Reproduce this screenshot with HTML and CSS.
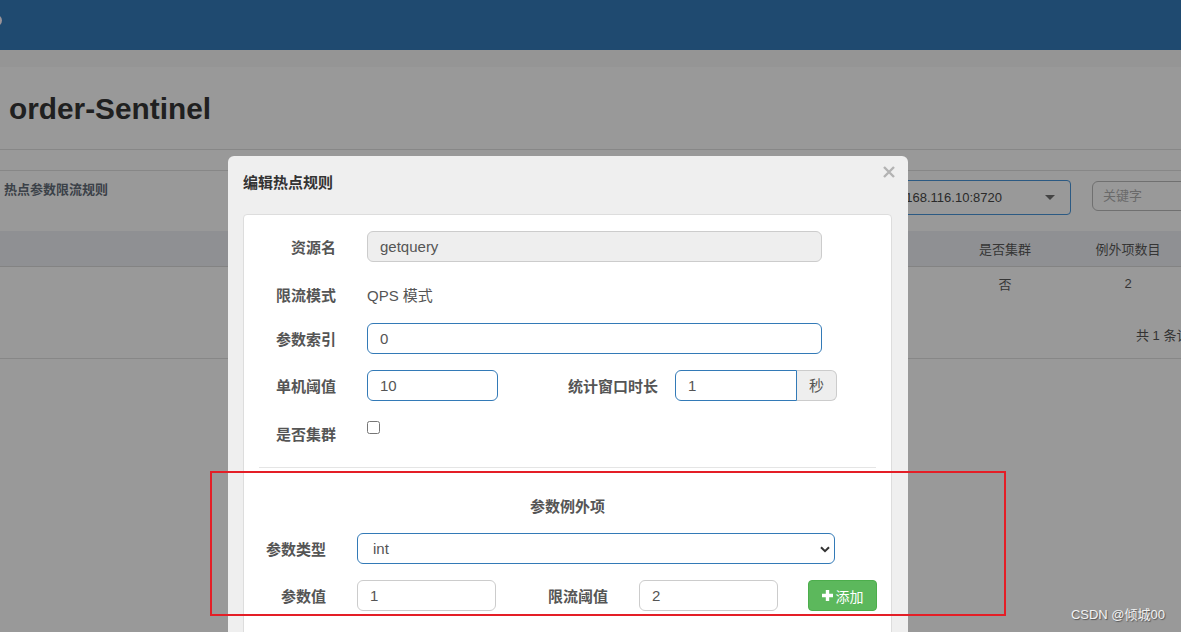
FILE: index.html
```html
<!DOCTYPE html>
<html lang="zh-CN">
<head>
<meta charset="utf-8">
<title>order-Sentinel</title>
<link rel="stylesheet" href="styles.css">
</head>
<body>
<div class="page">
  <header class="topbar"><span class="logo-edge"></span></header>
  <div class="strip"></div>
  <div class="titlebar"><h1 class="app-title">order-Sentinel</h1></div>
  <section class="rules">
    <div class="rules-head">
      <div class="rules-name">热点参数限流规则</div>
      <div class="machine-select"><span>192.168.116.10:8720</span><span class="caret"></span></div>
      <div class="keyword">关键字</div>
    </div>
    <div class="tgrid thead"><span></span><span class="col">是否集群</span><span class="col">例外项数目</span></div>
    <div class="tgrid trow"><span></span><span class="col">否</span><span class="col">2</span></div>
    <div class="pager">共 1 条记录</div>
  </section>
</div>

<div class="modal">
  <div class="modal-header">
    <div class="modal-title">编辑热点规则</div>
    <svg class="close" width="12" height="12" viewBox="0 0 12 12"><path d="M1 1 L11 11 M11 1 L1 11" stroke="#b3b3b3" stroke-width="2.4" fill="none"/></svg>
  </div>
  <div class="panel">
    <div class="row r1">
      <label class="lbl">资源名</label>
      <input class="input wide readonly ctl" value="getquery" readonly>
    </div>
    <div class="row r2">
      <label class="lbl">限流模式</label>
      <span class="static ctl">QPS 模式</span>
    </div>
    <div class="row r3">
      <label class="lbl">参数索引</label>
      <input class="input wide focus ctl" value="0">
    </div>
    <div class="row r4">
      <label class="lbl">单机阈值</label>
      <input class="input short focus ctl" value="10">
      <label class="lbl mid">统计窗口时长</label>
      <div class="group">
        <input class="input focus grp-in" value="1">
        <span class="addon">秒</span>
      </div>
    </div>
    <div class="row r5">
      <label class="lbl">是否集群</label>
      <input type="checkbox" class="chk">
    </div>
    <hr class="divider">
    <div class="sec-title">参数例外项</div>
    <div class="row ra">
      <label class="lbl lbl2">参数类型</label>
      <div class="select-wrap ctl">
        <select class="select"><option>int</option></select>
        <svg class="chev" width="10" height="7" viewBox="0 0 10 7"><path d="M1 1.2 L5 5.2 L9 1.2" stroke="#333" stroke-width="2" fill="none"/></svg>
      </div>
    </div>
    <div class="row rb">
      <label class="lbl lbl2">参数值</label>
      <input class="input sm ctl" value="1">
      <label class="lbl lbl3">限流阈值</label>
      <input class="input sm ctl" value="2">
      <button class="btn-add"><svg width="11" height="11" viewBox="0 0 11 11"><path d="M5.5 0 V11 M0 5.5 H11" stroke="#fff" stroke-width="3.4"/></svg><span>添加</span></button>
    </div>
  </div>
</div>

<div class="annotation"></div>
<div class="watermark">CSDN @倾城00</div>
</body>
</html>
```
FILE: styles.css
```css
* { box-sizing: border-box; }
html, body { margin: 0; padding: 0; }
body {
  width: 1181px;
  height: 632px;
  overflow: hidden;
  position: relative;
  background: #999999;
  font-family: "Liberation Sans", "Noto Sans CJK SC", sans-serif;
  color: #333;
}

/* background page (under the dimmed backdrop) */
.topbar {
  height: 50px;
  background: #1f4a70;
  display: flex;
  align-items: flex-start;
  padding-top: 14px;
}
.logo-edge {
  width: 14px;
  height: 13px;
  border-radius: 50%;
  background: #9b9398;
  margin-left: -12px;
}
.strip { height: 17px; background: #959595; }
.titlebar {
  height: 83px;
  border-bottom: 1px solid #878787;
  padding: 25px 0 0 9px;
}
.app-title {
  margin: 0;
  font-size: 29.8px;
  line-height: 34px;
  font-weight: bold;
  color: #202020;
}
.rules { margin-top: 20px; border-top: 1px solid #878787; }
.rules-head {
  height: 60px;
  display: grid;
  grid-template-columns: 867px 204px 120px;
  align-items: start;
}
.rules-name {
  padding: 10px 0 0 4px;
  font-size: 13px;
  line-height: 18px;
  font-weight: bold;
  color: #3b4148;
}
.machine-select {
  margin-top: 9px;
  height: 35px;
  border: 1px solid #2c5a83;
  border-radius: 4px;
  padding: 0 15px 0 12px;
  font-size: 13px;
  color: #2a2a2a;
  display: flex;
  align-items: center;
  justify-content: space-between;
}
.caret {
  width: 0;
  height: 0;
  border-left: 5px solid transparent;
  border-right: 5px solid transparent;
  border-top: 5px solid #444;
}
.keyword {
  margin: 10px 0 0 21px;
  height: 30px;
  border: 1px solid #707070;
  border-radius: 6px;
  padding-left: 10px;
  font-size: 13px;
  line-height: 28px;
  color: #6a6a6a;
}
.tgrid {
  display: grid;
  grid-template-columns: 943px 124px 122px;
  align-items: center;
  font-size: 13px;
  color: #353535;
}
.col { text-align: center; }
.thead { height: 36px; background: #8f9093; border-bottom: 1px solid #838383; }
.trow { height: 33px; }
.pager {
  height: 59px;
  border-bottom: 1px solid #878787;
  padding: 27px 0 0 1136px;
  font-size: 13px;
  line-height: 18px;
  color: #333;
  white-space: nowrap;
}

/* modal */
.modal {
  position: absolute;
  left: 228px;
  top: 156px;
  width: 680px;
  height: 520px;
  background: #efefef;
  border-radius: 6px;
}
.modal-header {
  height: 58px;
  display: flex;
  justify-content: space-between;
  align-items: flex-start;
  padding: 16px 13px 0 15px;
}
.modal-title {
  font-size: 15px;
  line-height: 21px;
  font-weight: bold;
  color: #333;
}
.close { margin-top: -6px; }
.panel {
  margin: 0 16px 0 15px;
  height: 480px;
  background: #fff;
  border: 1px solid #ddd;
  border-radius: 4px;
  padding-top: 16px;
}
.row { display: flex; align-items: flex-start; height: 31px; }
.r2 { margin-top: 17px; }
.r3 { margin-top: 13px; }
.r4 { margin-top: 16px; }
.r5 { margin-top: 17px; }
.ra { margin-top: 16px; }
.rb { margin-top: 16px; }
.lbl {
  flex: none;
  width: 92px;
  text-align: right;
  padding-top: 6px;
  font-size: 15px;
  line-height: 21px;
  font-weight: bold;
  color: #555;
}
.lbl.mid { width: 129px; margin-left: 31px; }
.lbl2 { width: 82px; }
.lbl3 { width: 81px; margin-left: 31px; }
.ctl { margin-left: 31px; }
.input {
  flex: none;
  height: 31px;
  border: 1px solid #ccc;
  border-radius: 6px;
  padding: 0 12px;
  font-family: inherit;
  font-size: 15px;
  color: #555;
  background: #fff;
  outline: none;
}
.input.wide { width: 455px; }
.input.short { width: 131px; }
.input.sm { width: 139px; }
.input.readonly { background: #eee; }
.input.focus { border-color: #337ab7; }
.static {
  padding-top: 6px;
  font-size: 15px;
  line-height: 21px;
  color: #555;
}
.group { display: flex; margin-left: 17px; }
.grp-in { width: 122px; border-radius: 6px 0 0 6px; }
.addon {
  width: 40px;
  height: 31px;
  background: #eee;
  border: 1px solid #ccc;
  border-left: none;
  border-radius: 0 6px 6px 0;
  font-size: 15px;
  line-height: 29px;
  text-align: center;
  color: #555;
}
.chk { width: 13px; height: 13px; margin: 3px 0 0 31px; }
.divider {
  margin: 18px 15px 0;
  height: 0;
  border: none;
  border-top: 1px solid #e5e5e5;
}
.sec-title {
  margin-top: 28px;
  text-align: center;
  font-size: 15px;
  line-height: 21px;
  font-weight: bold;
  color: #555;
}
.select-wrap { position: relative; width: 478px; height: 31px; }
.select {
  appearance: none;
  -webkit-appearance: none;
  width: 100%;
  height: 31px;
  border: 1px solid #337ab7;
  border-radius: 6px;
  padding: 0 15px;
  font-family: inherit;
  font-size: 15px;
  color: #555;
  background: #fff;
  outline: none;
}
.chev { position: absolute; right: 5px; top: 13px; }
.btn-add {
  margin-left: 30px;
  width: 69px;
  height: 31px;
  background: #5cb85c;
  border: 1px solid #4cae4c;
  border-radius: 4px;
  color: #fff;
  font-family: inherit;
  font-size: 14px;
  display: flex;
  align-items: center;
  justify-content: center;
  gap: 3px;
  padding: 0;
}

/* annotation & watermark */
.annotation {
  position: absolute;
  left: 210px;
  top: 471px;
  width: 796px;
  height: 145px;
  border: 2px solid #e41e26;
}
.watermark {
  position: absolute;
  right: 16px;
  top: 606px;
  font-size: 13px;
  line-height: 18px;
  color: #f2f2f2;
  text-shadow: 1px 1px 1px rgba(0, 0, 0, 0.45);
}
```
